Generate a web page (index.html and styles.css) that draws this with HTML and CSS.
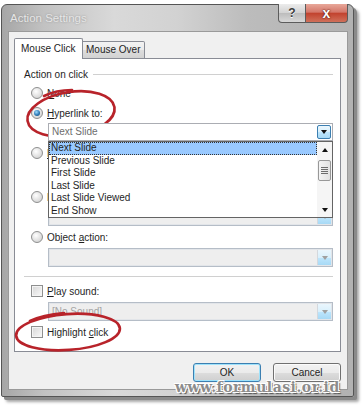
FILE: index.html
```html
<!DOCTYPE html>
<html lang="en">
<head>
  <meta charset="UTF-8">
  <meta name="viewport" content="width=device-width, initial-scale=1.0">
  <title>Action Settings</title>
  <link rel="stylesheet" href="styles.css">
</head>
<body>

  <div class="window">
    <div class="titlebar">
      <span class="title">Action Settings</span>
      <div class="caption">
        <span class="cap-btn help">?</span>
        <span class="cap-btn close">x</span>
      </div>
    </div>

    <div class="client">
      <div class="tabs">
        <div class="tab active">Mouse Click</div>
        <div class="tab inactive">Mouse Over</div>
      </div>

      <div class="panel">
        <div class="group-title">Action on click</div>

        <div class="option first"><span class="radio"></span><span><u>N</u>one</span></div>
        <div class="option first"><span class="radio checked"></span><span><u>H</u>yperlink to:</span></div>
        <div class="field combo open">
          <span class="value">Next Slide</span>
          <span class="drop"><i class="arrow"></i></span>
          <div class="popup">
            <ul class="items">
              <li class="selected">Next Slide</li>
              <li>Previous Slide</li>
              <li>First Slide</li>
              <li>Last Slide</li>
              <li>Last Slide Viewed</li>
              <li>End Show</li>
            </ul>
            <div class="scroll">
              <span class="step"><i class="arrow up"></i></span>
              <span class="thumb"></span>
              <span class="track"></span>
              <span class="step"><i class="arrow"></i></span>
            </div>
          </div>
        </div>

        <div class="option first"><span class="radio"></span><span><u>R</u>un program:</span></div>
        <div class="field textbox"></div>

        <div class="option after-text"><span class="radio"></span><span>Run <u>m</u>acro:</span></div>
        <div class="field combo disabled">
          <span class="value"></span>
          <span class="drop"><i class="arrow"></i></span>
        </div>

        <div class="option"><span class="radio"></span><span>Object <u>a</u>ction:</span></div>
        <div class="field combo disabled spaced">
          <span class="value"></span>
          <span class="drop"><i class="arrow"></i></span>
        </div>

        <div class="separator"></div>

        <div class="option sound"><span class="check"></span><span><u>P</u>lay sound:</span></div>
        <div class="field combo disabled spaced">
          <span class="value">[No Sound]</span>
          <span class="drop"><i class="arrow"></i></span>
        </div>

        <div class="option"><span class="check"></span><span>Highlight <u>c</u>lick</span></div>
      </div>

      <div class="actions">
        <span class="btn default">OK</span>
        <span class="btn">Cancel</span>
      </div>
    </div>
  </div>

  <div class="watermark">www.formulasi.or.id</div>

  <svg class="marks" width="364" height="406" viewBox="0 0 364 406">
    <ellipse cx="71" cy="114" rx="44" ry="22" transform="rotate(-9 71 114)" />
    <path d="M44 96 C52 92 62 90 72 90" />
    <ellipse cx="68" cy="332" rx="52" ry="18" transform="rotate(-4 68 332)" />
    <path d="M30 321 C40 316 52 314 64 313" />
  </svg>

</body>
</html>
```

FILE: styles.css
```css
body {
  margin: 0;
  width: 364px;
  height: 406px;
  position: relative;
  overflow: hidden;
  background-color: #ffffff;
  font-family: "Liberation Sans", Arial, sans-serif;
  font-size: 10px;
  color: #1e1e1e;
}
u {
  text-decoration: underline;
  text-underline-offset: 1px;
}

/* window frame */
.window {
  margin: 4px 0 0 1px;
  width: 353px;
  height: 393px;
  box-sizing: border-box;
  border: 1px solid #555;
  border-radius: 6px 6px 2px 2px;
  background: linear-gradient(to right, #a6a6a6, #c2c2c2 12%, #d9d9d9 32%, #d2d2d2 50%, #bcbcbc 70%, #b2b2b2);
  box-shadow: 3px 3px 0 #8a8a8a, 5px 5px 3px rgba(0, 0, 0, 0.35);
}
.titlebar {
  height: 26px;
  display: flex;
  justify-content: space-between;
  align-items: flex-start;
  padding-left: 8px;
}
.title {
  line-height: 26px;
  font-size: 11.5px;
  color: #e6e6e6;
  text-shadow: 0 0 2px rgba(110, 110, 110, 0.6);
}
.caption {
  display: flex;
  margin: -1px 5px 0 0;
}
.cap-btn {
  height: 19px;
  box-sizing: border-box;
  display: flex;
  align-items: center;
  justify-content: center;
  border: 1px solid #5c5c5c;
  border-top: none;
  font-weight: bold;
}
.help {
  width: 28px;
  border-radius: 0 0 0 4px;
  background: linear-gradient(#ececec, #d2d2d2 50%, #bcbcbc 51%, #d8d8d8);
  color: #3c3c3c;
  font-size: 12px;
  text-shadow: 0 1px #fff;
}
.close {
  width: 42px;
  border-left: none;
  border-radius: 0 0 4px 0;
  background: linear-gradient(#e8a89a, #d4776a 45%, #c2432f 52%, #d0705a);
  color: #fff;
  font-size: 14px;
  text-shadow: 0 0 2px #5a1a10, 0 0 1px #5a1a10;
}

/* client area */
.client {
  margin: 0 5px 0 6px;
  height: 359px;
  box-sizing: border-box;
  border: 1px solid #9a9a9a;
  background-color: #f0f0f0;
  padding: 6px 6px 0 5px;
}
.tabs {
  display: flex;
  align-items: flex-end;
  height: 21px;
  margin-bottom: -1px;
  position: relative;
  z-index: 1;
}
.tab {
  box-sizing: border-box;
  border: 1px solid #898c95;
}
.tab.active {
  width: 69px;
  height: 21px;
  border-bottom: none;
  border-radius: 2px 2px 0 0;
  background-color: #fff;
  padding-left: 6px;
  line-height: 20px;
}
.tab.inactive {
  width: 62px;
  height: 18px;
  border-left: none;
  border-radius: 0 2px 0 0;
  background: linear-gradient(#f3f3f3, #ebebeb 50%, #dddddd 51%, #d2d2d2);
  padding-left: 3px;
  line-height: 16px;
}

.panel {
  position: relative;
  width: 327px;
  height: 294px;
  box-sizing: border-box;
  border: 1px solid #898c95;
  background-color: #fff;
  padding: 8px 7px 0 9px;
}
.group-title {
  display: flex;
  align-items: center;
  height: 14px;
}
.group-title::after {
  content: "";
  flex: 1;
  height: 1px;
  margin-left: 5px;
  background-color: #d0d0d0;
}
.separator {
  height: 1px;
  margin-top: 9px;
  background-color: #d0d0d0;
}

.option {
  display: flex;
  align-items: center;
  gap: 4px;
  height: 16px;
  margin: 3px 0 0 7px;
}
.option.first {
  margin-top: 4px;
}
.option.after-text {
  margin-top: 7px;
}
.option.sound {
  margin-top: 6px;
}
.radio {
  width: 12px;
  height: 12px;
  box-sizing: border-box;
  border: 1px solid #8e8f8f;
  border-radius: 50%;
  background: radial-gradient(circle at 40% 35%, #ffffff, #e6e6e6 45%, #c9c9c9);
  display: flex;
  align-items: center;
  justify-content: center;
}
.radio.checked::after {
  content: "";
  width: 6px;
  height: 6px;
  border-radius: 50%;
  background: radial-gradient(circle at 40% 35%, #9fdcff, #2b79b5 55%, #12406a);
}
.check {
  width: 12px;
  height: 12px;
  box-sizing: border-box;
  border: 1px solid #8e8f8f;
  background: linear-gradient(135deg, #d6d6d6, #f9f9f9);
  box-shadow: inset 0 0 0 1px #f4f4f4;
}

/* fields */
.field {
  margin: 2px 0 0 24px;
}
.field.spaced {
  margin-top: 3px;
}
.textbox {
  height: 18px;
  margin-top: 3px;
  box-sizing: border-box;
  border: 1px solid #abadb3;
}
.combo {
  display: flex;
  height: 18px;
  box-sizing: border-box;
  border: 1px solid #abadb3;
  background-color: #fff;
  position: relative;
}
.combo.open {
  z-index: 2;
}
.combo .value {
  flex: 1;
  padding-left: 3px;
  line-height: 16px;
  color: #6d6d6d;
}
.combo .drop {
  width: 14px;
  margin: 1px;
  box-sizing: border-box;
  border: 1px solid #3c7fb1;
  border-radius: 2px;
  background: linear-gradient(#eaf6fd, #d9f0fc 50%, #bee6fd 51%, #a7d9f5);
  display: flex;
  align-items: center;
  justify-content: center;
}
.combo.disabled {
  height: 19px;
  border-color: #b5bdc7;
  background-color: #eeeeee;
  box-shadow: inset 0 0 0 1px #e2e5e9;
}
.combo.disabled .value {
  line-height: 17px;
  color: #a3a3a3;
}
.combo.disabled .drop {
  margin: 1px 1px 1px 0;
  border: none;
  border-left: 1px solid #d4d8dd;
  border-radius: 0;
  background-color: #f6f6f6;
}
.combo.disabled .arrow {
  border-top-color: #a0a0a0;
}
.arrow {
  width: 0;
  height: 0;
  border-left: 3.5px solid transparent;
  border-right: 3.5px solid transparent;
  border-top: 4px solid #111;
}
.arrow.up {
  border-top: none;
  border-bottom: 4px solid #111;
}

/* open drop-down list */
.popup {
  position: absolute;
  top: 17px;
  left: -1px;
  right: -1px;
  height: 77px;
  box-sizing: border-box;
  border: 1px solid #646464;
  background-color: #fff;
  display: flex;
}
.items {
  flex: 1;
  list-style: none;
  margin: 0;
  padding: 0;
}
.items li {
  height: 12.5px;
  line-height: 12.5px;
  padding-left: 2px;
}
.items li.selected {
  background-color: #99c9ff;
  outline: 1px dotted #333;
  outline-offset: -1px;
}
.scroll {
  width: 15px;
  display: flex;
  flex-direction: column;
  background-color: #f5f5f5;
}
.scroll .step {
  height: 15px;
  display: flex;
  align-items: center;
  justify-content: center;
}
.scroll .track {
  flex: 1;
}
.thumb {
  height: 21px;
  margin: 3px 1px 0;
  box-sizing: border-box;
  border: 1px solid #989898;
  border-radius: 2px;
  background: linear-gradient(to right, #f4f4f4, #e2e2e2);
  display: flex;
  align-items: center;
  justify-content: center;
}
.thumb::before {
  content: "";
  width: 7px;
  height: 7px;
  background: repeating-linear-gradient(#6d6d6d 0 1px, transparent 1px 2px);
}

/* dialog buttons */
.actions {
  display: flex;
  justify-content: flex-end;
  gap: 12px;
  margin-top: 11px;
}
.btn {
  width: 68px;
  height: 19px;
  box-sizing: border-box;
  border: 1px solid #707070;
  border-radius: 3px;
  background: linear-gradient(#f2f2f2, #ebebeb 50%, #dddddd 51%, #cfcfcf);
  box-shadow: inset 0 0 0 1px #fbfbfb;
  text-align: center;
  line-height: 17px;
}
.btn.default {
  border-color: #3c7fb1;
  box-shadow: inset 0 0 0 1px #9fe2fb;
}

/* overlays */
.watermark {
  position: absolute;
  left: 175px;
  top: 379px;
  font-family: "DejaVu Serif", serif;
  font-weight: bold;
  font-size: 14px;
  letter-spacing: 0.5px;
  color: #8c8c8c;
  text-shadow: -1px -1px 0 #fff, 1px -1px 0 #fff, -1px 1px 0 #fff, 1px 1px 0 #fff, 2px 2px 1px #555;
}
.marks {
  position: absolute;
  left: 0;
  top: 0;
  pointer-events: none;
}
.marks ellipse,
.marks path {
  fill: none;
  stroke: #b8232a;
  stroke-width: 2.7;
  stroke-linecap: round;
}
```
